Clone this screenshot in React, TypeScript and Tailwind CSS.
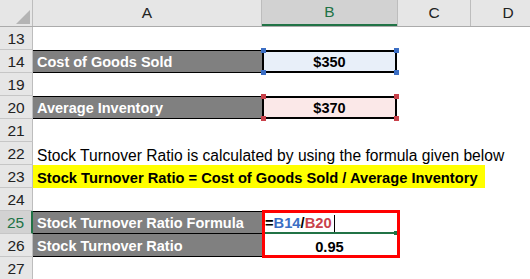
import React from "react";

const font = { fontFamily: '"Liberation Sans", Arial, sans-serif' };

function RowHead({ n, selected }: { n: number; selected?: boolean }) {
  return (
    <div
      className={
        "w-[33px] shrink-0 h-full flex items-center justify-center pt-[1px] text-[15.5px] border-b border-[#c6c6c6] " +
        (selected
          ? "bg-[#d2d2d2] text-[#217346] border-r-2 border-r-[#217346]"
          : "bg-[#e6e6e6] text-[#222] border-r border-r-[#bdbdbd]")
      }
    >
      {n}
    </div>
  );
}

function Row({ children, n, selected }: { children?: React.ReactNode; n: number; selected?: boolean }) {
  return (
    <div className="flex h-[23px] relative">
      <RowHead n={n} selected={selected} />
      {children}
    </div>
  );
}

function GrayA({ text, top = true }: { text: string; top?: boolean }) {
  return (
    <div
      className={
        "w-[229px] shrink-0 h-full bg-[#808080] text-white font-bold text-[14.5px] leading-[17px] flex items-end pb-[1px] pl-[4px] border-b border-black " +
        (top ? "border-t" : "")
      }
    >
      {text}
    </div>
  );
}

function RefBox({ color, fill, text }: { color: string; fill: string; text: string }) {
  const sq = "absolute w-[5px] h-[5px]";
  return (
    <div className={"w-[135px] shrink-0 h-full relative flex items-end justify-center pb-[2px] font-bold text-[14.5px] leading-[17px] text-black " + fill}>
      {text}
      <div className={"absolute inset-0 border-2 " + color.replace("bg-", "border-")} />
      <div className={sq + " " + color + " -left-[1px] -top-[2px]"} />
      <div className={sq + " " + color + " -right-[2px] -top-[2px]"} />
      <div className={sq + " " + color + " -left-[1px] -bottom-[2px]"} />
      <div className={sq + " " + color + " -right-[2px] -bottom-[2px]"} />
    </div>
  );
}

export default function App() {
  return (
    <div className="w-[530px] h-[279px] overflow-hidden bg-white" style={font}>
      {/* column header */}
      <div className="flex h-[27px] bg-[#e6e6e6] border-b border-[#ababab] text-[15.5px] text-[#222]">
        <div className="w-[33px] shrink-0 h-full relative border-r border-[#bdbdbd]">
          <svg className="absolute left-0 top-0" width="33" height="27" viewBox="0 0 33 27">
            <polygon points="30,10 30,24 16,24" fill="#b4b4b4" />
          </svg>
        </div>
        <div className="w-[229px] shrink-0 flex items-center justify-center border-r border-[#bdbdbd]">A</div>
        <div className="w-[135px] shrink-0 flex items-center justify-center bg-[#d2d2d2] text-[#217346] border-b-2 border-[#217346]">B</div>
        <div className="w-[74px] shrink-0 flex items-center justify-center border-r border-[#bdbdbd] border-l border-l-[#bdbdbd]">C</div>
        <div className="w-[74px] shrink-0 flex items-center justify-center">D</div>
      </div>

      <Row n={13} />
      <Row n={14}>
        <GrayA text="Cost of Goods Sold" />
        <RefBox color="bg-[#3b6ec4]" fill="bg-[#e8eff9]" text="$350" />
      </Row>
      <Row n={19} />
      <Row n={20}>
        <GrayA text="Average Inventory" />
        <RefBox color="bg-[#c9414a]" fill="bg-[#fbe8e8]" text="$370" />
      </Row>
      <Row n={21} />
      <Row n={22}>
        <div className="flex items-end pb-[1px] pl-[4px] text-[15.6px] leading-[17px] text-black whitespace-nowrap">
          Stock Turnover Ratio is calculated by using the formula given below
        </div>
      </Row>
      <Row n={23}>
        <div className="w-[452px] shrink-0 h-full bg-[#ffff00] flex items-end pb-[1px] pl-[4px] text-[14.7px] leading-[17px] font-bold text-black whitespace-nowrap">
          Stock Turnover Ratio = Cost of Goods Sold / Average Inventory
        </div>
      </Row>
      <Row n={24} />
      <Row n={25} selected>
        <GrayA text="Stock Turnover Ratio Formula" />
        <div className="w-[135px] shrink-0 h-full relative flex items-end pb-[2px] pl-[3px] text-[14.7px] leading-[17px] font-bold">
          <span className="text-black">=</span>
          <span className="text-[#3b6ec4]">B14</span>
          <span className="text-black">/</span>
          <span className="text-[#c9414a]">B20</span>
          <span className="inline-block w-[1px] h-[17px] bg-black ml-[2px]" />
          <div className="absolute left-0 right-[2px] bottom-0 h-[2px] bg-[#217346]" />
          <div className="absolute -right-[1px] -bottom-[1px] w-[4px] h-[4px] bg-[#217346]" />
          <div className="absolute left-0 -top-[1px] w-[138px] h-[48px] border-[3px] border-[#ff0000] z-10" />
        </div>
      </Row>
      <Row n={26}>
        <GrayA text="Stock Turnover Ratio" top={false} />
        <div className="w-[135px] shrink-0 h-full flex items-end justify-center pb-[1px] text-[14.7px] leading-[17px] font-bold text-black">
          0.95
        </div>
      </Row>
      <Row n={27} />
    </div>
  );
}
